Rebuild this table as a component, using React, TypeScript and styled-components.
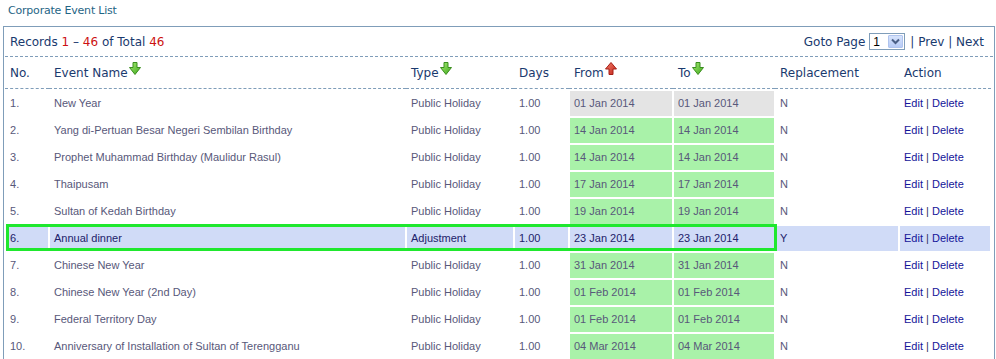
import React from "react";
import styled, { createGlobalStyle } from "styled-components";

const GlobalStyle = createGlobalStyle`
  body {
    margin: 0;
    background: #fff;
    font-family: "DejaVu Sans", Verdana, sans-serif;
  }
`;

const Page = styled.div`
  padding: 0 3px;
`;

const Title = styled.div`
  padding: 4px 0 0 5px;
  margin-bottom: 8px;
  font-size: 11px;
  line-height: 14px;
  letter-spacing: -0.2px;
  color: #1f6585;
`;

const Panel = styled.div`
  width: 988px;
  border: 1px solid #7f9db9;
  border-bottom: none;
  padding: 0 1px;
`;

const Toolbar = styled.div`
  display: flex;
  justify-content: space-between;
  align-items: center;
  height: 29px;
  padding: 0 9px 0 5px;
  border-bottom: 1px dashed #7f9db9;
  font-size: 12px;
  color: #1a3a6e;
`;

const Red = styled.span`
  color: #cc1111;
`;

const Pager = styled.div`
  display: flex;
  align-items: center;
  white-space: pre;
`;

const SelectBox = styled.div`
  display: flex;
  align-items: center;
  justify-content: space-between;
  width: 31px;
  height: 15px;
  margin: 0 5px 0 4px;
  border: 1px solid #7f9db9;
  font-family: "Liberation Sans", Arial, sans-serif;
  font-size: 12px;
  color: #000;
  padding-left: 3px;
  box-sizing: content-box;
`;

const SelectButton = styled.div`
  display: flex;
  align-items: center;
  justify-content: center;
  width: 15px;
  height: 13px;
  margin-right: 1px;
  border-radius: 1px;
  background: linear-gradient(#d6e3fc, #b7cbf6);
  border: 1px solid #b0c4ee;
  box-sizing: border-box;
`;

const TableWrap = styled.div`
  position: relative;
`;

const Table = styled.table`
  table-layout: fixed;
  width: 986px;
  border-collapse: separate;
  border-spacing: 0;
`;

const Th = styled.th`
  height: 30px;
  padding: 1px 0 0 5px;
  text-align: left;
  font-weight: normal;
  font-size: 12px;
  line-height: 15px;
  color: #1a3a6e;
  white-space: nowrap;
  border-bottom: 1px dashed #7f9db9;
  vertical-align: middle;
`;

const SortIcon = styled.svg`
  vertical-align: 2px;
  margin: -6px 0 0 1px;
`;

type Tone = "plain" | "gray" | "green" | "sel";

const toneBg: Record<Tone, string> = {
  plain: "transparent",
  gray: "#e4e4e4",
  green: "#a9f2a9",
  sel: "#d0dbf7",
};

const Td = styled.td<{ $tone: Tone }>`
  padding: 0 0 0 4px;
  height: 25px;
  line-height: 25px;
  border-top: 2px solid transparent;
  border-left: 1px solid transparent;
  border-right: 1px solid transparent;
  background-clip: padding-box;
  background-color: ${(p) => toneBg[p.$tone]};
  font-family: "Liberation Sans", Arial, sans-serif;
  font-size: 11px;
  color: ${(p) => (p.$tone === "sel" ? "#22226a" : "#58587a")};
  white-space: nowrap;
  overflow: hidden;
`;

const Link = styled.span`
  color: #141499;
`;

const Bar = styled.span`
  color: #333366;
`;

const Highlight = styled.div<{ $row: number }>`
  position: absolute;
  left: 1px;
  top: ${(p) => 32 + p.$row * 27}px;
  width: 771px;
  height: 27px;
  border: 3px solid #1fe82e;
  box-sizing: border-box;
  pointer-events: none;
`;

const DownArrow = () => (
  <SortIcon width="12" height="13" viewBox="0 0 12 13">
    <defs>
      <linearGradient id="gd" x1="0" y1="0" x2="1" y2="1">
        <stop offset="0" stopColor="#a6ec72" />
        <stop offset="1" stopColor="#3ea71c" />
      </linearGradient>
    </defs>
    <path d="M4 0.5 H8 V5.5 H11.5 L6 12.5 L0.5 5.5 H4 Z" fill="url(#gd)" stroke="#3a8d1e" strokeWidth="1" />
  </SortIcon>
);

const UpArrow = () => (
  <SortIcon width="12" height="13" viewBox="0 0 12 13">
    <defs>
      <linearGradient id="gu" x1="0" y1="0" x2="1" y2="1">
        <stop offset="0" stopColor="#f07a68" />
        <stop offset="1" stopColor="#c4261a" />
      </linearGradient>
    </defs>
    <path d="M6 0.5 L11.5 7 H8 V12.5 H4 V7 H0.5 Z" fill="url(#gu)" stroke="#a41f16" strokeWidth="1" />
  </SortIcon>
);

type EventRow = {
  name: string;
  type: string;
  from: string;
  to: string;
  repl: string;
};

const rows: EventRow[] = [
  { name: "New Year", type: "Public Holiday", from: "01 Jan 2014", to: "01 Jan 2014", repl: "N" },
  { name: "Yang di-Pertuan Besar Negeri Sembilan Birthday", type: "Public Holiday", from: "14 Jan 2014", to: "14 Jan 2014", repl: "N" },
  { name: "Prophet Muhammad Birthday (Maulidur Rasul)", type: "Public Holiday", from: "14 Jan 2014", to: "14 Jan 2014", repl: "N" },
  { name: "Thaipusam", type: "Public Holiday", from: "17 Jan 2014", to: "17 Jan 2014", repl: "N" },
  { name: "Sultan of Kedah Birthday", type: "Public Holiday", from: "19 Jan 2014", to: "19 Jan 2014", repl: "N" },
  { name: "Annual dinner", type: "Adjustment", from: "23 Jan 2014", to: "23 Jan 2014", repl: "Y" },
  { name: "Chinese New Year", type: "Public Holiday", from: "31 Jan 2014", to: "31 Jan 2014", repl: "N" },
  { name: "Chinese New Year (2nd Day)", type: "Public Holiday", from: "01 Feb 2014", to: "01 Feb 2014", repl: "N" },
  { name: "Federal Territory Day", type: "Public Holiday", from: "01 Feb 2014", to: "01 Feb 2014", repl: "N" },
  { name: "Anniversary of Installation of Sultan of Terengganu", type: "Public Holiday", from: "04 Mar 2014", to: "04 Mar 2014", repl: "N" },
];

const SELECTED = 5;

const App: React.FC = () => {
  return (
    <Page>
      <GlobalStyle />
      <Title>Corporate Event List</Title>
      <Panel>
        <Toolbar>
          <div>
            Records <Red>1</Red> – <Red>46</Red> of Total <Red>46</Red>
          </div>
          <Pager>
            Goto Page
            <SelectBox>
              1
              <SelectButton>
                <svg width="9" height="7" viewBox="0 0 9 7">
                  <path d="M1 1.5 L4.5 5 L8 1.5" fill="none" stroke="#4a5f86" strokeWidth="2" />
                </svg>
              </SelectButton>
            </SelectBox>
            | Prev | Next
          </Pager>
        </Toolbar>
        <TableWrap>
          <Table>
            <colgroup>
              <col style={{ width: 44 }} />
              <col style={{ width: 357 }} />
              <col style={{ width: 108 }} />
              <col style={{ width: 55 }} />
              <col style={{ width: 104 }} />
              <col style={{ width: 102 }} />
              <col style={{ width: 124 }} />
              <col style={{ width: 92 }} />
            </colgroup>
            <thead>
              <tr>
                <Th>No.</Th>
                <Th>Event Name<DownArrow /></Th>
                <Th>Type<DownArrow /></Th>
                <Th>Days</Th>
                <Th>From<UpArrow /></Th>
                <Th>To<DownArrow /></Th>
                <Th>Replacement</Th>
                <Th>Action</Th>
              </tr>
            </thead>
            <tbody>
              {rows.map((r, i) => {
                const sel = i === SELECTED;
                const base: Tone = sel ? "sel" : "plain";
                const date: Tone = sel ? "sel" : i === 0 ? "gray" : "green";
                return (
                  <tr key={i}>
                    <Td $tone={base}>{i + 1}.</Td>
                    <Td $tone={base}>{r.name}</Td>
                    <Td $tone={base}>{r.type}</Td>
                    <Td $tone={base}>1.00</Td>
                    <Td $tone={date}>{r.from}</Td>
                    <Td $tone={date}>{r.to}</Td>
                    <Td $tone={base}>{r.repl}</Td>
                    <Td $tone={base}>
                      <Link>Edit</Link> <Bar>|</Bar> <Link>Delete</Link>
                    </Td>
                  </tr>
                );
              })}
            </tbody>
          </Table>
          <Highlight $row={SELECTED} />
        </TableWrap>
      </Panel>
    </Page>
  );
};

export default App;
